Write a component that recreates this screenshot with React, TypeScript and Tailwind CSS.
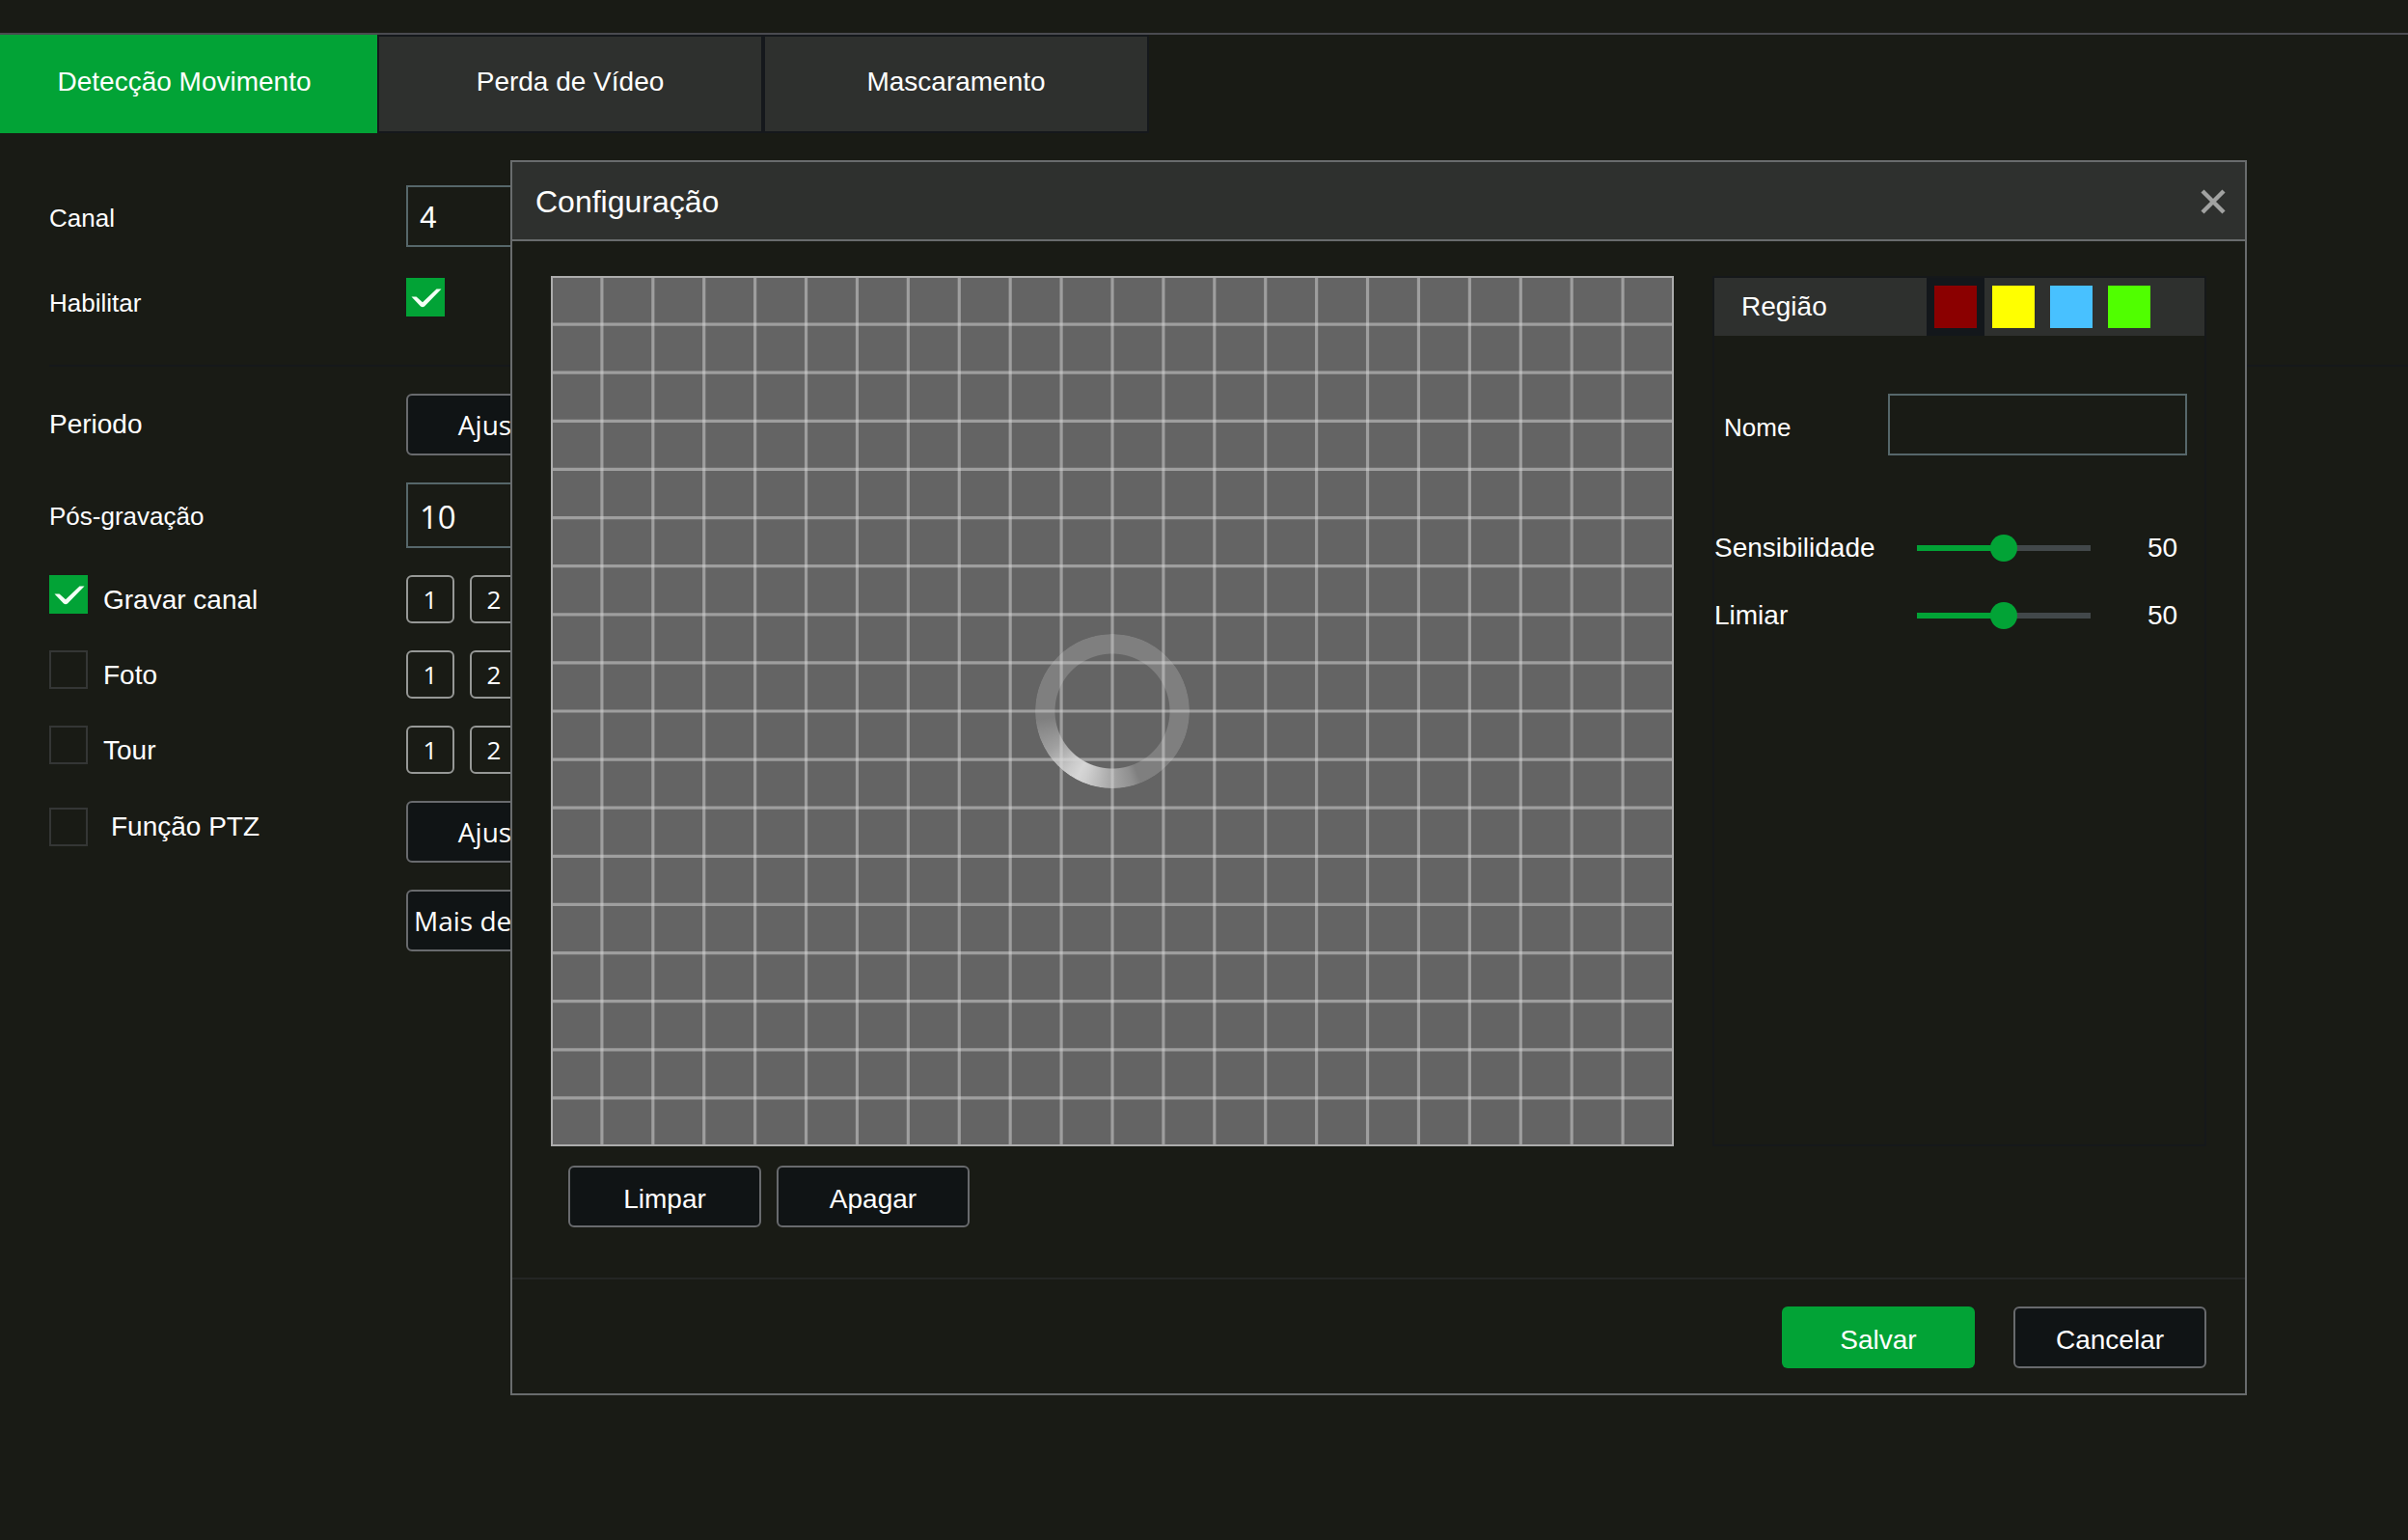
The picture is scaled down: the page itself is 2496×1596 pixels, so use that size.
import React, { useState } from 'react';
import clsx from 'clsx';

const TABS = ['Detecção Movimento', 'Perda de Vídeo', 'Mascaramento'];
const CHANNELS = [1, 2];
const REGIONS = [
    { name: 'Região 1', color: 'bg-[#8b0000]' },
    { name: 'Região 2', color: 'bg-[#ffff00]' },
    { name: 'Região 3', color: 'bg-[#48c1ff]' },
    { name: 'Região 4', color: 'bg-[#50ff00]' },
];

// Motion area: 22 x 18 cells
const GRID_W = 1164;
const GRID_H = 902;
const COLS = 22;
const ROWS = 18;

interface CheckboxProps {
    id: string;
    defaultChecked?: boolean;
}

function Checkbox({ id, defaultChecked = false }: CheckboxProps) {
    return (
        <span className="relative block w-10 h-10 shrink-0">
            <input
                id={id}
                type="checkbox"
                defaultChecked={defaultChecked}
                className="peer block w-10 h-10 appearance-none border-2 border-[#343635] checked:border-[#02a336] checked:bg-[#02a336]"
            />
            <svg
                viewBox="0 0 40 40"
                className="absolute inset-0 w-10 h-10 pointer-events-none opacity-0 peer-checked:opacity-100"
                fill="#f4fff6"
            >
                <path d="M5.5 19.5 H10.5 L17 25.2 L31.5 11.5 H36.5 L19 29.5 Q17 31 15 29.5 Z" />
            </svg>
        </span>
    );
}

interface DarkButtonProps {
    children: React.ReactNode;
    className?: string;
}

function DarkButton({ children, className }: DarkButtonProps) {
    return (
        <button
            type="button"
            className={clsx('h-16 w-[200px] rounded-md border-2 border-[#686a6d] bg-[#101415] text-[28px] whitespace-nowrap', className)}
        >
            {children}
        </button>
    );
}

function ChannelButtons() {
    return (
        <div className="flex gap-4">
            {CHANNELS.map(ch => (
                <button
                    key={ch}
                    type="button"
                    className="w-[50px] h-[50px] rounded-md border-2 border-[#969896] font-['Open_Sans',sans-serif] text-[26px] leading-none"
                >
                    {ch}
                </button>
            ))}
        </div>
    );
}

interface CheckRowProps {
    id: string;
    label: string;
    defaultChecked?: boolean;
}

function CheckRow({ id, label, defaultChecked }: CheckRowProps) {
    return (
        <div className="flex h-[50px]">
            <div className="flex w-[370px] shrink-0 gap-4">
                <Checkbox id={id} defaultChecked={defaultChecked} />
                <label htmlFor={id} className="text-[28px] leading-[52px]">{label}</label>
            </div>
            <ChannelButtons />
        </div>
    );
}

interface SliderRowProps {
    id: string;
    label: string;
}

function SliderRow({ id, label }: SliderRowProps) {
    const [value, setValue] = useState(50);

    return (
        <div className="flex h-[70px] items-center text-[28px]">
            <label htmlFor={id} className="w-[210px] shrink-0">{label}</label>
            <input
                id={id}
                type="range"
                min={0}
                max={100}
                value={value}
                onChange={e => setValue(Number(e.target.value))}
                style={{ backgroundImage: `linear-gradient(to right, #02a336 ${value}%, #42484a ${value}%)` }}
                className="w-[180px] h-1.5 appearance-none [&::-webkit-slider-thumb]:appearance-none [&::-webkit-slider-thumb]:w-7 [&::-webkit-slider-thumb]:h-7 [&::-webkit-slider-thumb]:rounded-full [&::-webkit-slider-thumb]:bg-[#02a336]"
            />
            <output htmlFor={id} className="ml-[59px]">{value}</output>
        </div>
    );
}

function MotionGrid() {
    const cellW = GRID_W / COLS;
    const cellH = GRID_H / ROWS;

    return (
        <div className="relative h-[902px] bg-[#646464]">
            {/* Loading ring */}
            <div className="absolute inset-0 flex items-center justify-center">
                <div
                    role="status"
                    aria-label="Carregando"
                    className="w-40 h-40 rounded-full bg-[conic-gradient(#7f7f7f_158deg,#8f8f8f_164deg,#a6a6a6_180deg,#cfcfcf_202deg,#d6d6d6_208deg,#cacaca_217deg,#a0a0a0_238deg,#7f7f7f_264deg)] [mask-image:radial-gradient(circle,transparent_59px,black_60px)]"
                />
            </div>
            <svg
                viewBox={`0 0 ${GRID_W} ${GRID_H}`}
                preserveAspectRatio="none"
                className="absolute inset-0 w-full h-full"
                fill="none"
                stroke="#d8d8d8"
                strokeOpacity="0.5"
            >
                {Array.from({ length: COLS - 1 }, (_, i) => (
                    <line key={`c${i}`} x1={(i + 1) * cellW} x2={(i + 1) * cellW} y1={0} y2={GRID_H} strokeWidth="3.2" />
                ))}
                {Array.from({ length: ROWS - 1 }, (_, i) => (
                    <line key={`r${i}`} x1={0} x2={GRID_W} y1={(i + 1) * cellH} y2={(i + 1) * cellH} strokeWidth="3.2" />
                ))}
                <rect x="1" y="1" width={GRID_W - 2} height={GRID_H - 2} stroke="#acacac" strokeOpacity="1" strokeWidth="2" />
            </svg>
        </div>
    );
}

function ConfigDialog() {
    const [region, setRegion] = useState(0);

    return (
        <div
            role="dialog"
            aria-labelledby="config-title"
            className="absolute top-[166px] left-[529px] right-[167px] border-2 border-[#696c6d] bg-[#191b15]"
        >
            <div className="flex h-[82px] items-center justify-between border-b-2 border-[#696c6d] bg-[#2e302e] pt-0.5 pr-5 pl-6">
                <h2 id="config-title" className="text-[32px]">Configuração</h2>
                <button type="button" aria-label="Fechar">
                    <svg viewBox="0 0 26 26" className="w-[26px] h-[26px]" stroke="#a1a2a1" strokeWidth="4.4">
                        <path d="M2 2 L24 24 M24 2 L2 24" />
                    </svg>
                </button>
            </div>

            <div className="flex gap-10 px-10 pt-9 pb-[52px]">
                <div className="flex-1">
                    <MotionGrid />
                    <div className="mt-5 flex gap-4 pl-[18px]">
                        <DarkButton className="pt-1.5">Limpar</DarkButton>
                        <DarkButton className="pt-1.5">Apagar</DarkButton>
                    </div>
                </div>

                {/* Region settings */}
                <div className="h-[902px] w-[512px] shrink-0 border-2 border-[#15181a]">
                    <div className="flex h-[60px] items-center bg-[#2e302e]">
                        <span className="w-[220px] pl-7 text-[28px]">Região</span>
                        {REGIONS.map((r, i) => (
                            <button
                                key={r.name}
                                type="button"
                                aria-label={r.name}
                                onClick={() => setRegion(i)}
                                className={clsx('flex w-[60px] h-[60px] items-center justify-center', region === i && 'bg-[#13171b]')}
                            >
                                <span className={clsx('block w-11 h-11', r.color)} />
                            </button>
                        ))}
                    </div>
                    <div className="mt-[60px] flex items-center pr-[18px]">
                        <label htmlFor="nome" className="w-[180px] shrink-0 pt-1.5 pl-2.5 text-[26px]">Nome</label>
                        <input id="nome" type="text" className="h-16 w-full border-2 border-[#56676a] px-2.5 text-[28px]" />
                    </div>
                    <div className="mt-[61px]">
                        <SliderRow id="sensibilidade" label="Sensibilidade" />
                        <SliderRow id="limiar" label="Limiar" />
                    </div>
                </div>
            </div>

            <div className="flex justify-end gap-10 border-t-2 border-[#242624] px-10 pt-7 pb-[26px]">
                <button type="button" className="h-16 w-[200px] rounded-md bg-[#02a336] pt-1.5 text-[28px]">Salvar</button>
                <DarkButton className="pt-1.5">Cancelar</DarkButton>
            </div>
        </div>
    );
}

export default function App() {
    const [tab, setTab] = useState(0);

    return (
        <div className="relative min-h-screen overflow-hidden bg-[#191b15] pt-[34px] font-['Liberation_Sans',Arial,sans-serif] text-white">
            <nav className="border-t-2 border-[#4a4b50]">
                <div className="-ml-[9px] flex">
                    {TABS.map((name, i) => (
                        <button
                            key={name}
                            type="button"
                            onClick={() => setTab(i)}
                            className={clsx(
                                'h-[102px] w-[400px] border-2 pb-1 text-[28px]',
                                tab === i ? 'border-[#02a336] bg-[#02a336]' : 'border-[#15181c] bg-[#2e302e]'
                            )}
                        >
                            {name}
                        </button>
                    ))}
                </div>
            </nav>

            <form className="flex flex-col gap-7 pt-[54px] pl-[51px]">
                <div className="flex items-center">
                    <label htmlFor="canal" className="w-[370px] shrink-0 pt-1 text-[26px]">Canal</label>
                    <select
                        id="canal"
                        defaultValue="4"
                        className="h-16 w-[200px] appearance-none border-2 border-[#56676a] bg-[#191b15] pt-0.5 pl-3 text-[32px]"
                    >
                        <option value="4">4</option>
                    </select>
                </div>
                <div className="flex h-[66px] pt-1">
                    <label htmlFor="habilitar" className="w-[370px] shrink-0 text-[26px] leading-[52px]">Habilitar</label>
                    <Checkbox id="habilitar" defaultChecked />
                </div>
                <hr className="border-t-2 border-[#15181a]" />
                <div className="flex items-center">
                    <span className="w-[370px] shrink-0 text-[28px]">Periodo</span>
                    <DarkButton className="font-['Open_Sans',sans-serif]">Ajustar</DarkButton>
                </div>
                <div className="flex items-center">
                    <label htmlFor="pos-gravacao" className="w-[370px] shrink-0 pt-0.5 text-[26px]">Pós-gravação</label>
                    <input
                        id="pos-gravacao"
                        type="text"
                        defaultValue="10"
                        className="h-[68px] w-[200px] border-2 border-[#56676a] px-3 pt-0.5 font-['Open_Sans',sans-serif] text-[33px]"
                    />
                </div>
                <CheckRow id="gravar" label="Gravar canal" defaultChecked />
                <CheckRow id="foto" label="Foto" />
                <CheckRow id="tour" label="Tour" />
                <div className="flex">
                    <div className="flex h-[54px] w-[370px] shrink-0 items-center gap-6">
                        <Checkbox id="ptz" />
                        <label htmlFor="ptz" className="text-[28px]">Função PTZ</label>
                    </div>
                    <DarkButton className="font-['Open_Sans',sans-serif]">Ajustar</DarkButton>
                </div>
                <div className="flex pl-[370px]">
                    <DarkButton className="px-1.5 text-left font-['Open_Sans',sans-serif]">Mais definições</DarkButton>
                </div>
            </form>

            <ConfigDialog />
        </div>
    );
}
